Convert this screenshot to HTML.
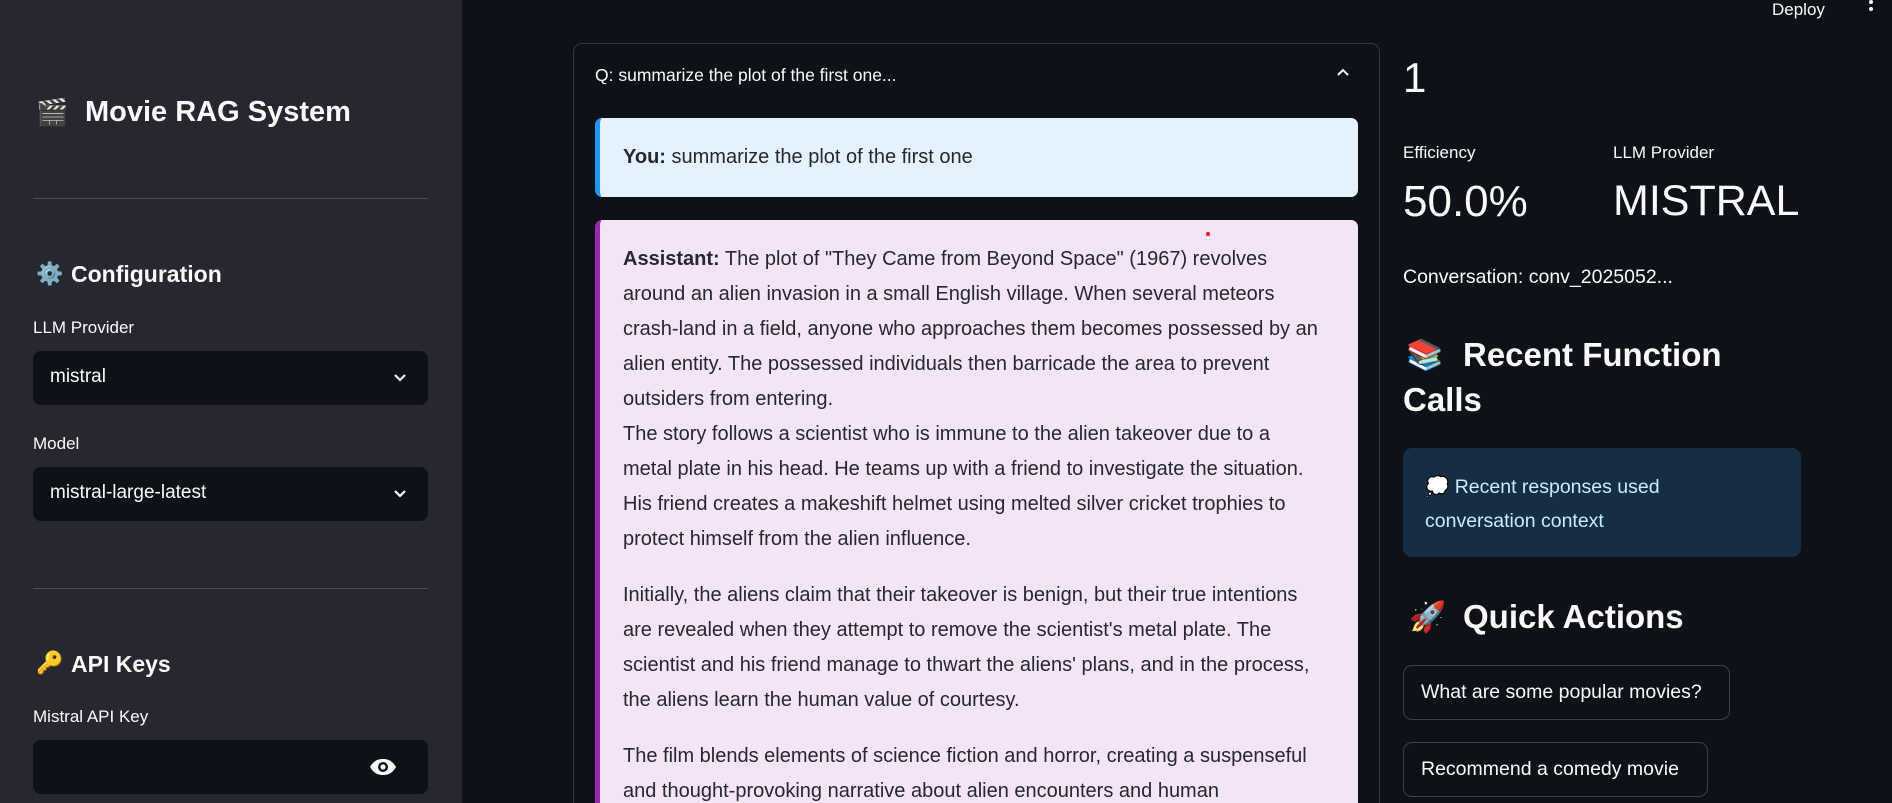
<!DOCTYPE html>
<html style="overflow:hidden;height:803px"><head><meta charset="utf-8"><style>
*{margin:0;padding:0;box-sizing:border-box}
body{width:1892px;height:803px;overflow:hidden;background:#0e1117;font-family:"Liberation Sans",sans-serif;color:#fafafa;position:relative}
.a{position:absolute;white-space:nowrap}
#sb{position:absolute;left:0;top:0;width:462px;height:803px;background:#262730}
.hr{position:absolute;left:33px;width:395px;height:1px;background:#4a4b55}
.sel{position:absolute;left:33px;width:395px;height:54px;background:#0e1117;border-radius:8px}
.sel span{position:absolute;left:17px;top:15px;font-size:19px}
.chev{position:absolute;right:20px;top:18px}
.lbl{font-size:17px}
.h3{font-size:23px;font-weight:bold}
.msg{font-size:20px;color:#262730;line-height:35px}
.btn{position:absolute;left:1403px;height:55px;border:1px solid #3d3f4a;border-radius:9px;background:#0e1117;font-size:19.5px;padding:15px 17px;white-space:nowrap}
</style></head><body>
<div id="sb">
 <div class="a" style="left:36px;top:97px;font-size:26px">🎬</div>
 <div class="a" style="left:85px;top:96px;font-size:29px;font-weight:bold">Movie RAG System</div>
 <div class="hr" style="top:198px"></div>
 <div class="a" style="left:36px;top:261px;font-size:22px">⚙️</div>
 <div class="a h3" style="left:71px;top:261px">Configuration</div>
 <div class="a lbl" style="left:33px;top:318px">LLM Provider</div>
 <div class="sel" style="top:351px"><span>mistral</span><svg class="chev" width="16" height="16" viewBox="0 0 16 16"><path d="M3 6l5 5 5-5" stroke="#fafafa" stroke-width="2.2" fill="none"/></svg></div>
 <div class="a lbl" style="left:33px;top:434px">Model</div>
 <div class="sel" style="top:467px"><span>mistral-large-latest</span><svg class="chev" width="16" height="16" viewBox="0 0 16 16"><path d="M3 6l5 5 5-5" stroke="#fafafa" stroke-width="2.2" fill="none"/></svg></div>
 <div class="hr" style="top:588px"></div>
 <div class="a" style="left:36px;top:650px;font-size:22px">🔑</div>
 <div class="a h3" style="left:71px;top:651px">API Keys</div>
 <div class="a lbl" style="left:33px;top:707px">Mistral API Key</div>
 <div class="sel" style="top:740px"><svg style="position:absolute;left:336px;top:18px" width="28" height="18" viewBox="0 0 28 18"><path d="M1 9C5 2 10 1 14 1s9 1 13 8c-4 7-9 8-13 8S5 16 1 9z" fill="#fafafa"/><circle cx="14" cy="9" r="5" fill="#0e1117"/><circle cx="14" cy="9" r="2.6" fill="#fafafa"/></svg></div>
</div>
<div class="a" style="left:1772px;top:0px;font-size:17px">Deploy</div>
<svg class="a" style="left:1866px;top:0" width="10" height="16" viewBox="0 0 10 16"><circle cx="5" cy="2" r="2" fill="#fafafa"/><circle cx="5" cy="9" r="2" fill="#fafafa"/></svg>

<div style="position:absolute;left:573px;top:43px;width:807px;height:780px;border:1px solid #33353f;border-radius:9px"></div>
<div class="a" style="left:595px;top:65px;font-size:17.5px">Q: summarize the plot of the first one...</div>
<svg class="a" style="left:1336px;top:67px" width="14" height="10" viewBox="0 0 14 10"><path d="M2 8l5-5 5 5" stroke="#fafafa" stroke-width="2" fill="none"/></svg>

<div style="position:absolute;left:595px;top:118px;width:763px;height:79px;background:#e3f2fd;border-left:5px solid #2196f3;border-radius:7px"></div>
<div class="a msg" style="left:623px;top:140px"><b>You:</b> summarize the plot of the first one</div>

<div style="position:absolute;left:595px;top:220px;width:763px;height:600px;background:#f3e5f5;border-left:5px solid #9c27b0;border-radius:7px"></div>
<div style="position:absolute;left:1206px;top:232px;width:4px;height:4px;border-radius:2px;background:#e00"></div>
<div class="a msg" style="left:623px;top:242px">
<b>Assistant:</b> The plot of "They Came from Beyond Space" (1967) revolves<br>
around an alien invasion in a small English village. When several meteors<br>
crash-land in a field, anyone who approaches them becomes possessed by an<br>
alien entity. The possessed individuals then barricade the area to prevent<br>
outsiders from entering.<br>
The story follows a scientist who is immune to the alien takeover due to a<br>
metal plate in his head. He teams up with a friend to investigate the situation.<br>
His friend creates a makeshift helmet using melted silver cricket trophies to<br>
protect himself from the alien influence.
<div style="height:21px"></div>
Initially, the aliens claim that their takeover is benign, but their true intentions<br>
are revealed when they attempt to remove the scientist's metal plate. The<br>
scientist and his friend manage to thwart the aliens' plans, and in the process,<br>
the aliens learn the human value of courtesy.
<div style="height:21px"></div>
The film blends elements of science fiction and horror, creating a suspenseful<br>
and thought-provoking narrative about alien encounters and human
</div>

<div class="a" style="left:1403px;top:54px;font-size:42px">1</div>
<div class="a" style="left:1403px;top:143px;font-size:17px">Efficiency</div>
<div class="a" style="left:1613px;top:143px;font-size:17px">LLM Provider</div>
<div class="a" style="left:1403px;top:177px;font-size:44px">50.0%</div>
<div class="a" style="left:1613px;top:177px;font-size:43px">MISTRAL</div>
<div class="a" style="left:1403px;top:266px;font-size:19.5px">Conversation: conv_2025052...</div>
<div class="a" style="left:1406px;top:338px;font-size:30px">📚</div>
<div class="a" style="left:1463px;top:336px;font-size:33px;font-weight:bold">Recent Function</div>
<div class="a" style="left:1403px;top:381px;font-size:33px;font-weight:bold">Calls</div>
<div style="position:absolute;left:1403px;top:448px;width:398px;height:109px;background:#172d43;border-radius:9px"></div>
<div class="a" style="left:1425px;top:470px;font-size:19.5px;line-height:34px;color:#c7ebff">💭 Recent responses used<br>conversation context</div>
<div class="a" style="left:1409px;top:600px;font-size:30px">🚀</div>
<div class="a" style="left:1463px;top:598px;font-size:33px;font-weight:bold">Quick Actions</div>
<div class="btn" style="top:665px;width:327px">What are some popular movies?</div>
<div class="btn" style="top:742px;width:305px">Recommend a comedy movie</div>
</body></html>
